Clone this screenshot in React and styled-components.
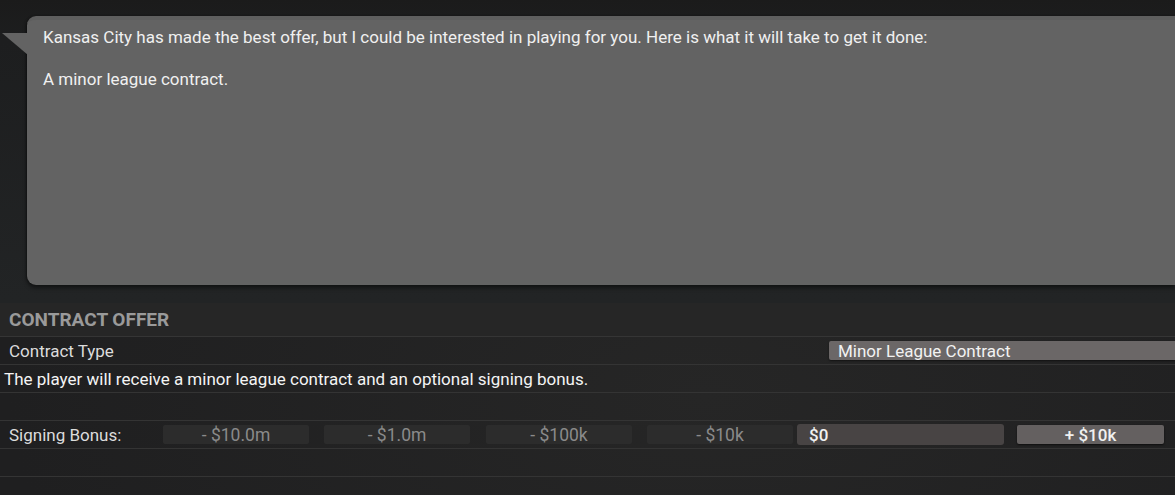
import React from 'react';
import styled, { createGlobalStyle } from 'styled-components';

const GlobalStyle = createGlobalStyle`
  html, body {
    margin: 0;
    padding: 0;
    background: #1f2022;
  }
  body {
    font-family: Roboto, "Liberation Sans", sans-serif;
  }
`;

const bonusSteps = [
  { label: '- $10.0m', gap: 0 },
  { label: '- $1.0m', gap: 15 },
  { label: '- $100k', gap: 16 },
  { label: '- $10k', gap: 15 },
];

const App = () => (
  <>
    <GlobalStyle />
    <Page>
      <BubbleArea>
        <Bubble>
          <BubbleText>
            Kansas City has made the best offer, but I could be interested in playing for you. Here is
            what it will take to get it done:
          </BubbleText>
          <BubbleText>&nbsp;</BubbleText>
          <BubbleText>A minor league contract.</BubbleText>
        </Bubble>
      </BubbleArea>

      <Section>
        <SectionHeader>CONTRACT OFFER</SectionHeader>
        <Row>
          <RowLabel>Contract Type</RowLabel>
          <Dropdown>Minor League Contract</Dropdown>
        </Row>
        <Row>
          <Description>The player will receive a minor league contract and an optional signing bonus.</Description>
        </Row>
        <Row />
        <Row>
          <RowLabel $width={163}>Signing Bonus:</RowLabel>
          {bonusSteps.map((step) => (
            <StepButton key={step.label} $gap={step.gap}>
              {step.label}
            </StepButton>
          ))}
          <AmountField>$0</AmountField>
          <PlusButton>+ $10k</PlusButton>
        </Row>
        <Row />
        <Row $last />
      </Section>
    </Page>
  </>
);

export default App;

const Page = styled.div`
  width: 1175px;
  height: 495px;
  overflow: hidden;
  display: flex;
  flex-direction: column;
  background: radial-gradient(ellipse at 60% 80%, #262626 0%, #1f1f20 70%);
`;

const BubbleArea = styled.div`
  background: linear-gradient(to bottom, #1b1b1b 0px, #1d1e1f 40px, #222425 300px);
  padding: 16px 0 18px 27px;
`;

const Bubble = styled.div`
  position: relative;
  height: 258px;
  background: #636363;
  border-radius: 9px 0 0 9px;
  border-top: 4px solid #5e5e5e;
  padding: 7px 16px 0 16px;
  box-shadow: 0 3px 4px rgba(0, 0, 0, 0.45), -1px 0 2px rgba(0, 0, 0, 0.3);

  &::before {
    content: '';
    position: absolute;
    left: -25px;
    top: 13px;
    width: 0;
    height: 0;
    border-right: 26px solid #636363;
    border-bottom: 22px solid transparent;
  }
`;

const BubbleText = styled.div`
  color: #f0f0f0;
  font-size: 17px;
  line-height: 21px;
`;

const Section = styled.div`
  display: flex;
  flex-direction: column;
`;

const SectionHeader = styled.div`
  height: 33px;
  background: #262626;
  border-bottom: 1px solid #353535;
  padding-left: 9px;
  display: flex;
  align-items: center;
  color: #9a9a9a;
  font-weight: 700;
  font-size: 19px;
`;

const Row = styled.div`
  height: 27px;
  border-bottom: 1px solid ${({ $last }) => ($last ? 'transparent' : '#343434')};
  display: flex;
  align-items: center;
`;

const RowLabel = styled.div`
  width: ${({ $width }) => ($width ? `${$width}px` : 'auto')};
  flex: ${({ $width }) => ($width ? 'none' : '1')};
  padding-left: 9px;
  box-sizing: border-box;
  color: #dcdcdc;
  font-size: 17px;
`;

const Dropdown = styled.div`
  width: 346px;
  height: 19px;
  background: #6b6767;
  border-radius: 2px 0 0 2px;
  box-shadow: 0 1px 2px rgba(0, 0, 0, 0.5);
  padding-left: 9px;
  box-sizing: border-box;
  display: flex;
  align-items: center;
  color: #f2f2f2;
  font-size: 17px;
`;

const Description = styled.div`
  padding-left: 4px;
  color: #f4f4f4;
  font-size: 17px;
`;

const StepButton = styled.div`
  width: 146px;
  height: 19px;
  margin-left: ${({ $gap }) => $gap}px;
  background: #2c2c2c;
  border-radius: 2px;
  display: flex;
  align-items: center;
  justify-content: center;
  color: #8a8a8a;
  font-size: 17.5px;
`;

const AmountField = styled.div`
  width: 207px;
  height: 21px;
  margin-left: 4px;
  background: #484444;
  border-radius: 3px;
  padding-left: 12px;
  box-sizing: border-box;
  display: flex;
  align-items: center;
  color: #f0f0f0;
  font-size: 17px;
  font-weight: 500;
`;

const PlusButton = styled.div`
  width: 147px;
  height: 19px;
  margin-left: 13px;
  background: #646060;
  border-radius: 2px;
  box-shadow: 0 1px 2px rgba(0, 0, 0, 0.6);
  display: flex;
  align-items: center;
  justify-content: center;
  color: #f0f0f0;
  font-size: 17px;
  font-weight: 500;
`;
